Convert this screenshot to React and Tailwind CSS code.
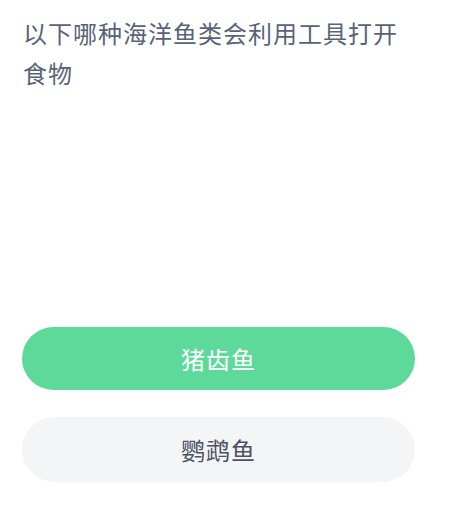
export default function App() {
  return (
    <div
      className="flex h-[516px] w-[455px] flex-col bg-white"
      style={{ fontFamily: '"Noto Sans CJK SC", "Noto Sans", sans-serif' }}
    >
      <h1 className="ml-[23px] mt-[13px] w-[390px] text-[24px] font-normal leading-[40px] tracking-[1px] text-[#586379]">
        以下哪种海洋鱼类会利用工具打开食物
      </h1>

      <div className="mt-auto mb-[34px] flex flex-col gap-[27px] px-[22px]">
        <button className="flex h-[63px] w-[393px] items-center justify-center rounded-full bg-[#5dd99a] text-[24px] tracking-[1px] text-white">
          猪齿鱼
        </button>
        <button className="flex h-[65px] w-[393px] items-center justify-center rounded-full bg-[#f3f5f7] text-[24px] tracking-[1px] text-[#4a5263]">
          鹦鹉鱼
        </button>
      </div>
    </div>
  );
}
